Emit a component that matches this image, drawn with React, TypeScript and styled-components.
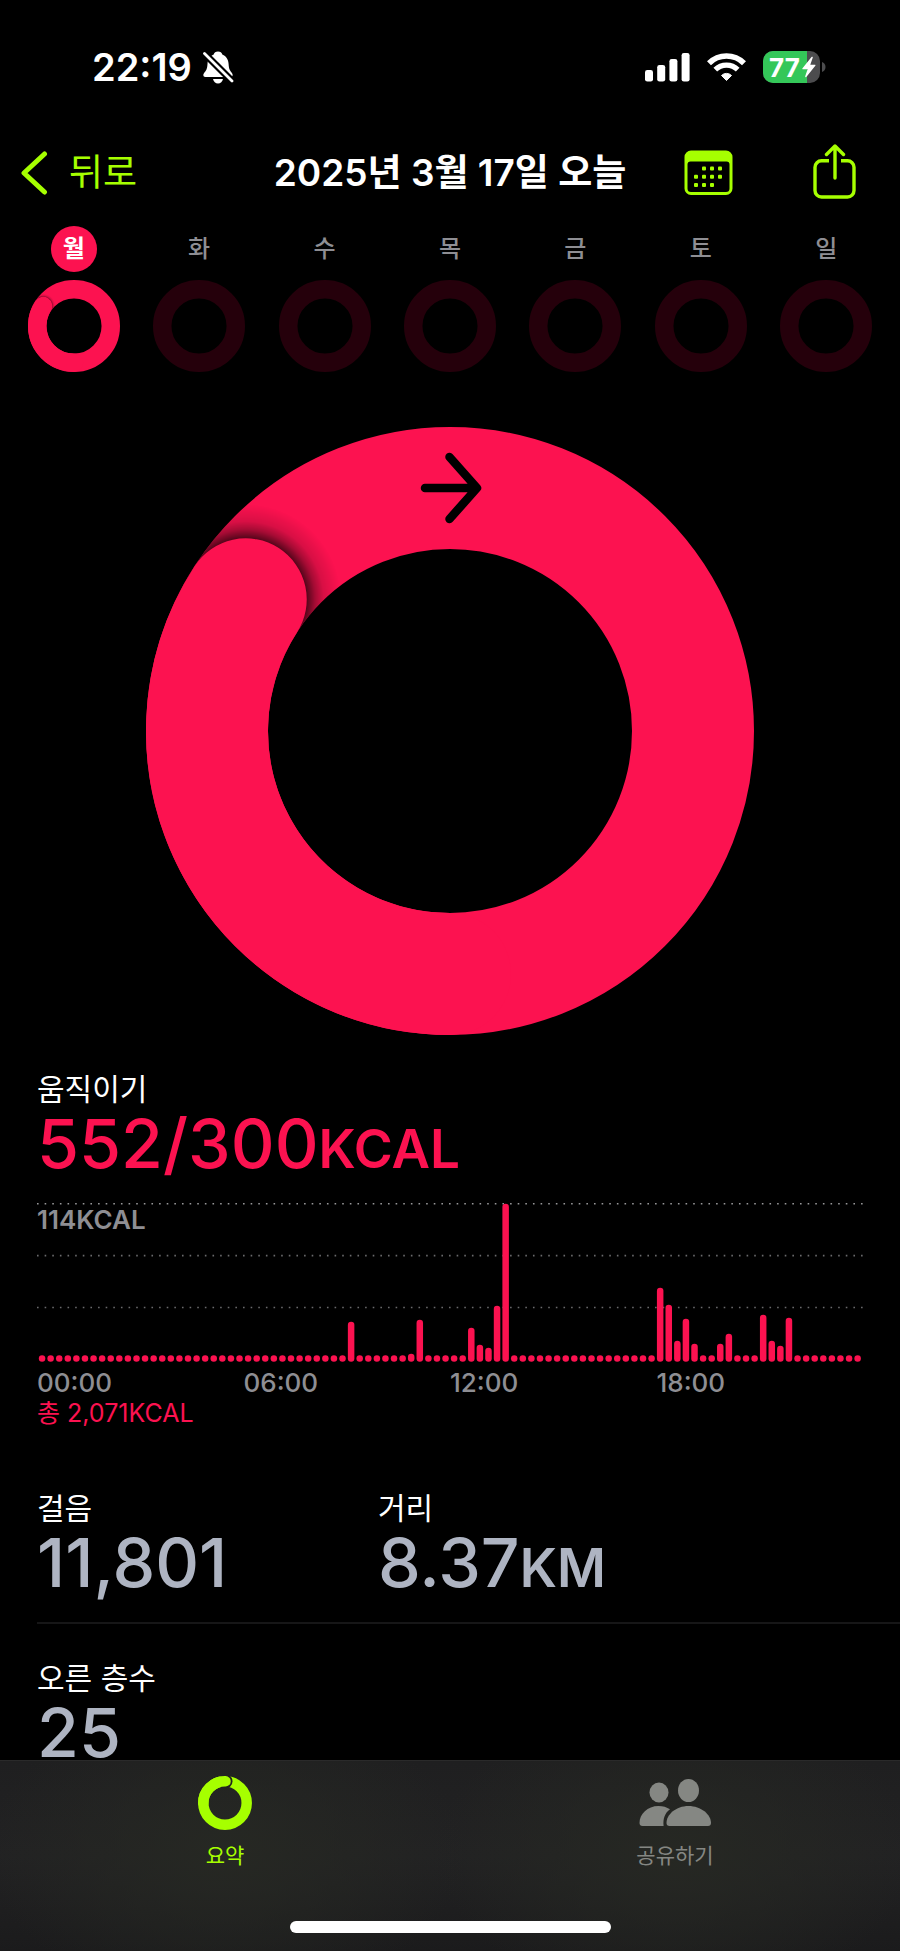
import React, { useId } from "react";
import styled, { createGlobalStyle } from "styled-components";

const color = {
  pink: "#fc1250",
  pinkDim: "#25000b",
  lime: "#a6ff00",
  gray: "#8e8e93",
  silver: "#aeb4c2",
};

const GlobalStyle = createGlobalStyle`
  *, *::before, *::after { box-sizing: border-box; }
  body {
    margin: 0;
    background: #000;
    color: #fff;
    font-family: Inter, "Noto Sans CJK KR", sans-serif;
  }
  h1, h2, p, dl, dt, dd, figure { margin: 0; font-weight: inherit; }
  button { padding: 0; border: 0; background: none; color: inherit; font: inherit; cursor: pointer; }
  a { color: inherit; text-decoration: none; }
  svg { display: block; }
`;

const Screen = styled.div`
  display: flex;
  flex-direction: column;
  min-height: 100vh;
`;

const StatusBar = styled.header`
  display: flex;
  align-items: center;
  justify-content: space-between;
  height: 134px;
  padding: 0 74px 0 92px;
`;

const StatusGroup = styled.div<{ $gap: number }>`
  display: flex;
  align-items: center;
  gap: ${(p) => p.$gap}px;
`;

const Clock = styled.time`
  font-size: 38px;
  font-weight: 600;
  line-height: 48px;
`;

const NavBar = styled.nav`
  display: grid;
  grid-template-columns: 1fr auto 1fr;
  align-items: center;
  height: 78px;
  padding: 0 21px;
`;

const BackButton = styled.button`
  display: flex;
  align-items: center;
  justify-self: start;
  gap: 20px;
  color: ${color.lime};
  font-size: 37px;
  line-height: 48px;
`;

const Title = styled.h1`
  font-size: 37px;
  font-weight: 600;
  line-height: 48px;
  white-space: nowrap;
`;

const NavActions = styled.div`
  display: flex;
  align-items: center;
  justify-self: end;
  gap: 80px;
  padding-right: 22px;
  color: ${color.lime};
`;

const Week = styled.div`
  display: flex;
  padding: 14px 11px 0;
`;

const Day = styled.button`
  display: flex;
  flex: 1;
  flex-direction: column;
  align-items: center;
  gap: 8px;
`;

const DayName = styled.span<{ $active: boolean }>`
  width: 46px;
  border-radius: 50%;
  background: ${(p) => (p.$active ? color.pink : "transparent")};
  color: ${(p) => (p.$active ? "#fff" : color.gray)};
  font-size: 24px;
  font-weight: ${(p) => (p.$active ? 600 : 500)};
  line-height: 46px;
`;

const DayRing = styled.div`
  width: 92px;
`;

const HeroRing = styled.div`
  width: min(608px, 80%);
  margin: 55px auto 36px;
`;

const Section = styled.section`
  padding: 0 37px;
`;

const Label = styled.h2`
  font-size: 30px;
  line-height: 36px;
`;

const Value = styled.p<{ $tone: string }>`
  margin-top: 8px;
  color: ${(p) => p.$tone};
  font-size: 68px;
  font-weight: 500;
  line-height: 56px;
  white-space: nowrap;
`;

const Unit = styled.span`
  font-size: 53px;
  font-weight: 600;
  line-height: 40px;
`;

const Chart = styled.figure`
  position: relative;
  margin-top: 32px;
`;

const ChartMax = styled.figcaption`
  position: absolute;
  top: 3px;
  left: 0;
  color: ${color.gray};
  font-size: 26px;
  font-weight: 600;
  line-height: 28px;
`;

const Hours = styled.div`
  display: grid;
  grid-template-columns: repeat(4, 1fr);
  margin-top: 6px;
  color: ${color.gray};
  font-size: 26px;
  font-weight: 500;
  line-height: 28px;
`;

const Total = styled.p`
  margin-top: 2px;
  color: ${color.pink};
  font-size: 25px;
  line-height: 28px;
`;

const Stats = styled.div`
  margin: 63px 0 0 37px;
`;

const StatRow = styled.div`
  display: grid;
  grid-template-columns: 341px 1fr;

  & + & {
    margin-top: 32px;
    padding-top: 36px;
    border-top: 2px solid #161617;
  }
`;

const TabBar = styled.nav`
  position: sticky;
  bottom: 0;
  margin-top: auto;
  border-top: 1px solid #2a2a2a;
  background:
    radial-gradient(ellipse 240px 150px at 25% 48%, #262823, transparent),
    radial-gradient(ellipse 240px 150px at 75% 48%, #262823, transparent),
    linear-gradient(#1f1f20, #222223 50%, #1b1b1c);
`;

const Tabs = styled.div`
  display: flex;
  padding-top: 15px;
`;

const Tab = styled.a<{ $active?: boolean }>`
  display: flex;
  flex: 1;
  flex-direction: column;
  align-items: center;
  gap: 12px;
  color: ${(p) => (p.$active ? color.lime : "#858783")};
  font-size: 21px;
  line-height: 28px;
`;

const HomeIndicator = styled.div`
  width: 321px;
  height: 12px;
  margin: 51px auto 18px;
  border-radius: 6px;
  background: #fff;
`;

function BellOffIcon() {
  return (
    <svg width="31" height="33" viewBox="0 0 31 33" aria-label="무음">
      <path fill="#fff" d="M15 .5c2.300 0 3.900 1.200 4.300 3 4 1.500 6 5 6.300 9.500.3 5 1.300 6.500 3.300 9 1.300 1.700.9 4-1.400 4H2.400c-2.200 0-2.700-2.300-1.300-4 2.200-2.600 3.100-4 3.400-9C4.800 8.500 6.700 5 10.700 3.500c.4-1.800 2-3 4.300-3Z" />
      <path fill="#fff" d="M10 28h10c-.5 2.600-2.500 4.500-5 4.500S10.500 30.600 10 28Z" />
      <path stroke="#000" strokeWidth="7" d="M-1 0 32 33" />
      <path stroke="#fff" strokeWidth="2.800" strokeLinecap="round" d="M1.500 2.500 29 30" />
    </svg>
  );
}

function SignalIcon() {
  return (
    <svg width="45" height="29" viewBox="0 0 45 29" fill="#fff" aria-label="신호">
      <rect x="0" y="17" width="8" height="11.500" rx="2.300" />
      <rect x="12.200" y="12" width="8" height="16.500" rx="2.300" />
      <rect x="24.400" y="6" width="8" height="22.500" rx="2.300" />
      <rect x="36.600" y="0" width="8" height="28.500" rx="2.300" />
    </svg>
  );
}

function WifiIcon() {
  return (
    <svg width="39" height="29" viewBox="0 0 39 29" fill="none" stroke="#fff" aria-label="와이파이">
      <path strokeWidth="5.600" d="M2 10.300a24.800 24.800 0 0 1 35 0" />
      <path strokeWidth="5.200" d="M8.300 16.700a15.800 15.800 0 0 1 22.400 0" />
      <path fill="#fff" strokeWidth="1" strokeLinejoin="round" d="m19.500 27.500-5-5a7 7 0 0 1 10 0Z" />
    </svg>
  );
}

function BatteryIcon() {
  const clip = useId();
  return (
    <svg width="63" height="32" viewBox="0 0 63 32" aria-label="배터리 77%">
      <clipPath id={clip}>
        <rect width="57" height="32" rx="10" />
      </clipPath>
      <g clipPath={`url(#${clip})`}>
        <rect width="57" height="32" fill="#4c4c4e" />
        <rect width="44" height="32" fill="#34c759" />
      </g>
      <path fill="#4c4c4e" d="M59 11c2 .6 3.500 2.500 3.500 5S61 20.400 59 21Z" />
      <text x="6" y="25.500" fill="#fff" fontSize="26" fontWeight="700">77</text>
      <path fill="#fff" d="M48.500 6 39.500 17.300c-.4.500-.1 1 .5 1h4.600l-2.400 7c-.2.900.5 1.200 1.100.6l9-11.200c.4-.5.100-1-.5-1h-4.500l2.500-7.100c.2-.9-.700-1.200-1.300-.6Z" />
    </svg>
  );
}

function ChevronIcon() {
  return (
    <svg width="28" height="44" viewBox="0 0 28 44" fill="none" stroke="currentColor" strokeWidth="5" strokeLinecap="round" strokeLinejoin="round" aria-hidden="true">
      <path d="M23.500 3 3 22l20.500 19" />
    </svg>
  );
}

function CalendarIcon() {
  const dots = [
    [20, 18.5], [28, 18.5], [36, 18.5],
    [12, 26.7], [20, 26.7], [28, 26.7], [36, 26.7],
    [12, 35], [20, 35], [28, 35],
  ];
  return (
    <svg width="49" height="46" viewBox="0 0 49 46" fill="currentColor" aria-hidden="true">
      <path fillRule="evenodd" d="M7 .5h35a6.500 6.500 0 0 1 6.500 6.500v31.500A6.500 6.500 0 0 1 42 45H7a6.500 6.500 0 0 1-6.500-6.500V7A6.500 6.500 0 0 1 7 .5Zm-.5 11A3 3 0 0 0 3.500 14.500V38.500A3.500 3.500 0 0 0 7 42h35a3.500 3.500 0 0 0 3.500-3.500V14.500a3 3 0 0 0-3-3Z" />
      {dots.map(([x, y]) => (
        <rect key={`${x}-${y}`} x={x - 2} y={y - 2} width="4" height="4" rx="1" />
      ))}
    </svg>
  );
}

function ShareIcon() {
  return (
    <svg width="44" height="58" viewBox="0 0 44 58" fill="none" stroke="currentColor" strokeWidth="3.400" strokeLinecap="round" strokeLinejoin="round" aria-hidden="true">
      <path strokeLinecap="butt" d="M16 16.800H8.500A6.500 6.500 0 0 0 2 23.300v23.200A6.500 6.500 0 0 0 8.500 53h26a6.500 6.500 0 0 0 6.500-6.500V23.300a6.500 6.500 0 0 0-6.500-6.500H28" />
      <path d="M22 34V2.500M13.500 10.500 22 2l8.500 8.500" />
    </svg>
  );
}

function SummaryIcon() {
  return (
    <svg width="54" height="54" viewBox="0 0 54 54" fill="none" stroke="currentColor" strokeWidth="10.500" aria-hidden="true">
      <circle cx="27" cy="27" r="21.700" />
      <circle cx="27.500" cy="5.300" r="7" fill="#222320" stroke="none" />
      <path strokeLinecap="round" d="M5.300 27A21.700 21.700 0 0 1 27.500 5.300" />
    </svg>
  );
}

function PeopleIcon() {
  return (
    <svg width="72" height="54" viewBox="0 0 72 54" fill="currentColor" aria-hidden="true">
      <ellipse cx="20" cy="16.500" rx="9.500" ry="10" />
      <ellipse cx="49.500" cy="14.500" rx="10.500" ry="11.500" />
      <path d="M31 33.300C26 37 23.800 42.500 24.600 50H3.500C1.700 50 .5 49 .5 47 .5 38 8.500 30 19.500 30c4.300 0 8.300 1.200 11.500 3.300Z" />
      <path d="M49.500 30C62 30 72 38.500 72 47c0 2-1.200 3-3 3H30.500c-1.900 0-3-1-3-3 0-8.500 9.500-17 22-17Z" />
    </svg>
  );
}

/* Activity ring that has lapped itself: the leading end casts a shadow on the lap below. */
function LappedRing({ spread, depth, arrow }: { spread: number; depth: number; arrow?: boolean }) {
  const id = useId();
  const angle = (302.8 * Math.PI) / 180;
  const tipX = 304 + 243 * Math.sin(angle);
  const tipY = 304 - 243 * Math.cos(angle);
  const reach = 61 + spread;
  return (
    <svg width="100%" viewBox="0 0 608 608" fill="none" role="img" aria-label="움직이기 184%">
      <defs>
        <radialGradient id={`${id}g`}>
          <stop offset={60 / reach} stopColor="#000" stopOpacity={depth} />
          <stop offset={(61 + spread * 0.25) / reach} stopColor="#000" stopOpacity={depth * 0.5} />
          <stop offset={(61 + spread * 0.5) / reach} stopColor="#000" stopOpacity={depth * 0.2} />
          <stop offset="1" stopColor="#000" stopOpacity="0" />
        </radialGradient>
        <mask id={`${id}m`}>
          <circle cx="304" cy="304" r="243" stroke="#fff" strokeWidth="122" />
        </mask>
      </defs>
      <circle cx="304" cy="304" r="243" stroke={color.pink} strokeWidth="122" />
      <g mask={`url(#${id}m)`}>
        <circle cx={tipX} cy={tipY} r={reach} fill={`url(#${id}g)`} />
      </g>
      <path
        d={`M304 547A243 243 0 0 1 ${tipX} ${tipY}`}
        stroke={color.pink}
        strokeWidth="122"
        strokeLinecap="round"
      />
      {arrow && (
        <path
          d="M279 61h52M303.500 30 331 61l-27.500 31"
          stroke="#000"
          strokeWidth="8.500"
          strokeLinecap="round"
          strokeLinejoin="round"
        />
      )}
    </svg>
  );
}

function EmptyRing() {
  return (
    <svg width="100%" viewBox="0 0 608 608" fill="none" aria-hidden="true">
      <circle cx="304" cy="304" r="243" stroke={color.pinkDim} strokeWidth="122" />
    </svg>
  );
}

/* One value for each quarter of an hour; every slot that is not listed is at rest. */
const activity: Record<number, number> = {
  36: 40, 43: 8, 44: 42, 50: 34, 51: 17, 52: 14, 53: 56, 54: 158,
  72: 74, 73: 57, 74: 21, 75: 43, 76: 18, 79: 18, 80: 28,
  84: 47, 85: 21, 86: 16, 87: 44,
};
const REST = 6.5;

function ActivityChart() {
  const slots = Array.from({ length: 96 }, (_, i) => activity[i] ?? REST);
  return (
    <svg width="100%" viewBox="0 0 826 160" role="img" aria-label="시간대별 활동량">
      {[0.8, 52.6, 104.5].map((y, i) => (
        <line
          key={y}
          x1="0"
          x2="826"
          y1={y}
          y2={y}
          stroke={i === 0 ? "#98989a" : "#6a6a6c"}
          strokeWidth="1.600"
          strokeDasharray="1.600 6.030"
        />
      ))}
      {slots.map((h, i) => (
        <rect key={i} x={1.8 + i * 8.585} y={158.8 - h} width="6.500" height={h} rx="3.250" fill={color.pink} />
      ))}
    </svg>
  );
}

const days = ["월", "화", "수", "목", "금", "토", "일"];

export default function App() {
  return (
    <>
      <GlobalStyle />
      <Screen>
        <StatusBar>
          <StatusGroup $gap={11}>
            <Clock>22:19</Clock>
            <BellOffIcon />
          </StatusGroup>
          <StatusGroup $gap={17}>
            <SignalIcon />
            <WifiIcon />
            <BatteryIcon />
          </StatusGroup>
        </StatusBar>

        <NavBar>
          <BackButton type="button">
            <ChevronIcon />
            뒤로
          </BackButton>
          <Title>2025년 3월 17일 오늘</Title>
          <NavActions>
            <button type="button" aria-label="캘린더"><CalendarIcon /></button>
            <button type="button" aria-label="공유"><ShareIcon /></button>
          </NavActions>
        </NavBar>

        <main>
          <Week>
            {days.map((name, i) => (
              <Day key={name} type="button" aria-pressed={i === 0}>
                <DayName $active={i === 0}>{name}</DayName>
                <DayRing>{i === 0 ? <LappedRing spread={20} depth={0.5} /> : <EmptyRing />}</DayRing>
              </Day>
            ))}
          </Week>

          <HeroRing>
            <LappedRing spread={34} depth={0.7} arrow />
          </HeroRing>

          <Section>
            <Label>움직이기</Label>
            <Value $tone={color.pink}>552/300<Unit>KCAL</Unit></Value>
            <Chart>
              <ActivityChart />
              <ChartMax>114KCAL</ChartMax>
            </Chart>
            <Hours>
              <span>00:00</span>
              <span>06:00</span>
              <span>12:00</span>
              <span>18:00</span>
            </Hours>
            <Total>총 2,071KCAL</Total>
          </Section>

          <Stats>
            <StatRow>
              <div>
                <Label>걸음</Label>
                <Value $tone={color.silver}>11,801</Value>
              </div>
              <div>
                <Label>거리</Label>
                <Value $tone={color.silver}>8.37<Unit>KM</Unit></Value>
              </div>
            </StatRow>
            <StatRow>
              <div>
                <Label>오른 층수</Label>
                <Value $tone={color.silver}>25</Value>
              </div>
            </StatRow>
          </Stats>
        </main>

        <TabBar>
          <Tabs>
            <Tab href="#summary" $active aria-current="page">
              <SummaryIcon />
              요약
            </Tab>
            <Tab href="#sharing">
              <PeopleIcon />
              공유하기
            </Tab>
          </Tabs>
          <HomeIndicator />
        </TabBar>
      </Screen>
    </>
  );
}
